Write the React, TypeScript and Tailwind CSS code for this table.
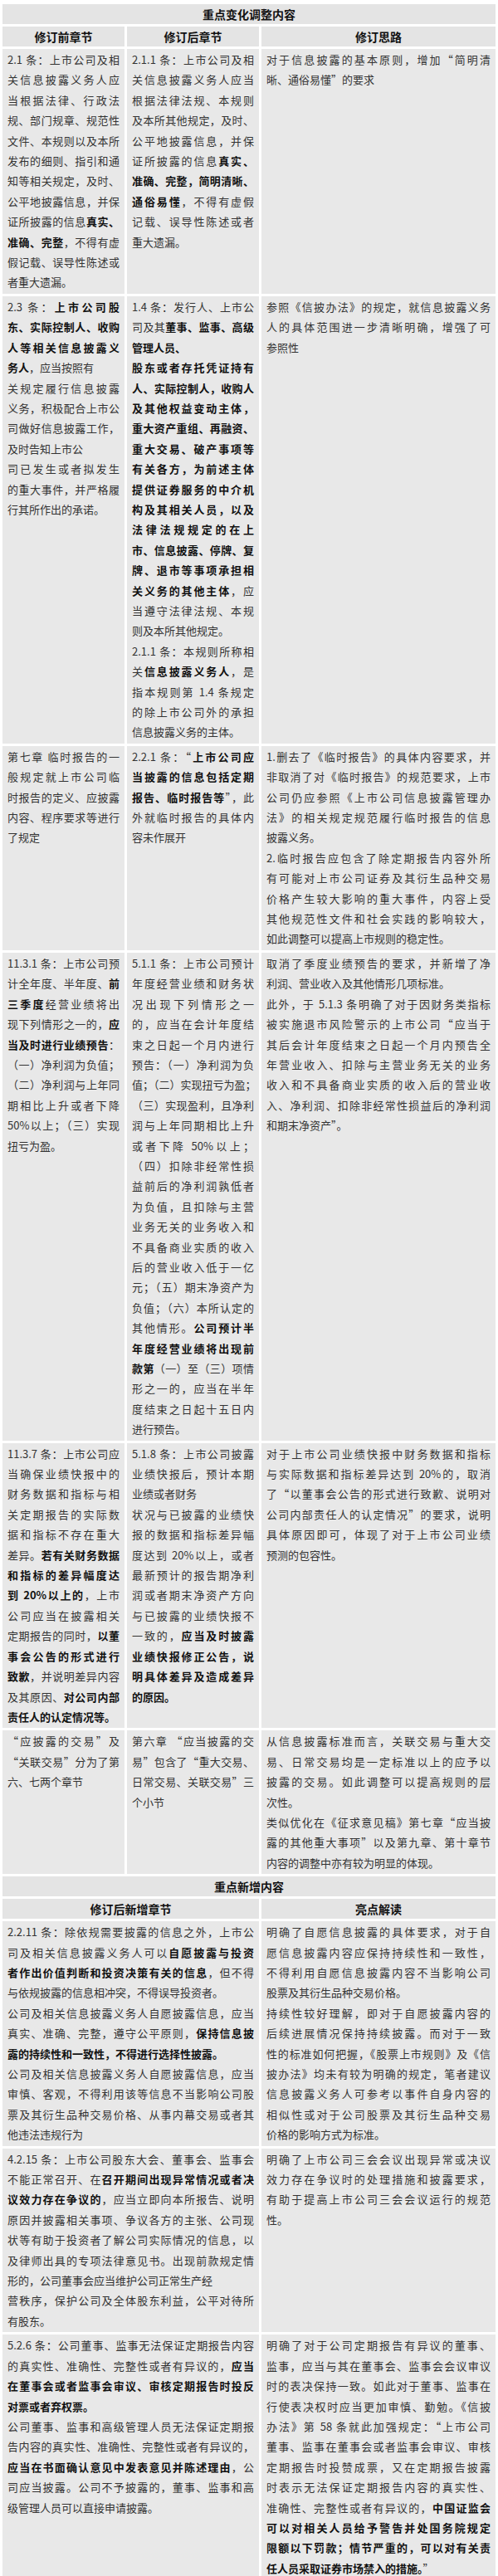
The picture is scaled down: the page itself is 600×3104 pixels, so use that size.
import React from 'react';

// Table data: one string per cell, one line per row of text.
// **…** marks bold runs; a trailing "|" marks a line that is not justified.

type Row = string[];

const changeRows: Row[] = [
  [
    `2.1 条：上市公司及相
关信息披露义务人应
当根据法律、行政法
规、部门规章、规范性
文件、本规则以及本所
发布的细则、指引和通
知等相关规定，及时、
公平地披露信息，并保
证所披露的信息**真实、**
**准确、完整**，不得有虚
假记载、误导性陈述或
者重大遗漏。|`,
    `2.1.1 条：上市公司及相
关信息披露义务人应当
根据法律法规、本规则
及本所其他规定，及时、
公平地披露信息，并保
证所披露的信息**真实、**
**准确、完整，简明清晰、**
**通俗易懂**，不得有虚假
记载、误导性陈述或者
重大遗漏。|`,
    `对于信息披露的基本原则，增加“简明清
晰、通俗易懂”的要求|`,
  ],
  [
    `2.3 条：**上市公司股**
**东、实际控制人、收购**
**人等相关信息披露义**
**务人**，应当按照有|
关规定履行信息披露
义务，积极配合上市公
司做好信息披露工作，
及时告知上市公|
司已发生或者拟发生
的重大事件，并严格履
行其所作出的承诺。|`,
    `1.4 条：发行人、上市公
司及其**董事、监事、高级**
**管理人员、**|
**股东或者存托凭证持有**
**人、实际控制人，收购人**
**及其他权益变动主体，**
**重大资产重组、再融资、**
**重大交易、破产事项等**
**有关各方，为前述主体**
**提供证券服务的中介机**
**构及其相关人员，以及**
**法律法规规定的在上**
**市、信息披露、停牌、复**
**牌、退市等事项承担相**
**关义务的其他主体**，应
当遵守法律法规、本规
则及本所其他规定。|
2.1.1 条：本规则所称相
关**信息披露义务人**，是
指本规则第 1.4 条规定
的除上市公司外的承担
信息披露义务的主体。|`,
    `参照《信披办法》的规定，就信息披露义务
人的具体范围进一步清晰明确，增强了可
参照性|`,
  ],
  [
    `第七章 临时报告的一
般规定就上市公司临
时报告的定义、应披露
内容、程序要求等进行
了规定|`,
    `2.2.1 条：“**上市公司应**
**当披露的信息包括定期**
**报告、临时报告等**”，此
外就临时报告的具体内
容未作展开|`,
    `1.删去了《临时报告》的具体内容要求，并
非取消了对《临时报告》的规范要求，上市
公司仍应参照《上市公司信息披露管理办
法》的相关规定规范履行临时报告的信息
披露义务。|
2.临时报告应包含了除定期报告内容外所
有可能对上市公司证券及其衍生品种交易
价格产生较大影响的重大事件，内容上受
其他规范性文件和社会实践的影响较大，
如此调整可以提高上市规则的稳定性。|`,
  ],
  [
    `11.3.1 条：上市公司预
计全年度、半年度、**前**
**三季度**经营业绩将出
现下列情形之一的，**应**
**当及时进行业绩预告**：
（一）净利润为负值；
（二）净利润与上年同
期相比上升或者下降
50%以上；（三）实现
扭亏为盈。|`,
    `5.1.1 条：上市公司预计
年度经营业绩和财务状
况出现下列情形之一
的，应当在会计年度结
束之日起一个月内进行
预告：（一）净利润为负
值；（二）实现扭亏为盈；
（三）实现盈利，且净利
润与上年同期相比上升
或者下降 50%以上；
（四）扣除非经常性损
益前后的净利润孰低者
为负值，且扣除与主营
业务无关的业务收入和
不具备商业实质的收入
后的营业收入低于一亿
元；（五）期末净资产为
负值；（六）本所认定的
其他情形。**公司预计半**
**年度经营业绩将出现前**
**款第**（一）至（三）项情
形之一的，应当在半年
度结束之日起十五日内
进行预告。|`,
    `取消了季度业绩预告的要求，并新增了净
利润、营业收入及其他情形几项标准。|
此外，于 5.1.3 条明确了对于因财务类指标
被实施退市风险警示的上市公司“应当于
其后会计年度结束之日起一个月内预告全
年营业收入、扣除与主营业务无关的业务
收入和不具备商业实质的收入后的营业收
入、净利润、扣除非经常性损益后的净利润
和期末净资产”。|`,
  ],
  [
    `11.3.7 条：上市公司应
当确保业绩快报中的
财务数据和指标与相
关定期报告的实际数
据和指标不存在重大
差异。**若有关财务数据**
**和指标的差异幅度达**
**到 20%以上的**，上市
公司应当在披露相关
定期报告的同时，**以董**
**事会公告的形式进行**
**致歉**，并说明差异内容
及其原因、**对公司内部**
**责任人的认定情况等。**|`,
    `5.1.8 条：上市公司披露
业绩快报后，预计本期
业绩或者财务|
状况与已披露的业绩快
报的数据和指标差异幅
度达到 20%以上，或者
最新预计的报告期净利
润或者期末净资产方向
与已披露的业绩快报不
一致的，**应当及时披露**
**业绩快报修正公告，说**
**明具体差异及造成差异**
**的原因。**|`,
    `对于上市公司业绩快报中财务数据和指标
与实际数据和指标差异达到 20%的，取消
了“以董事会公告的形式进行致歉、说明对
公司内部责任人的认定情况”的要求，说明
具体原因即可，体现了对于上市公司业绩
预测的包容性。|`,
  ],
  [
    `“应披露的交易”及
“关联交易”分为了第
六、七两个章节|`,
    `第六章 “应当披露的交
易”包含了“重大交易、
日常交易、关联交易”三
个小节|`,
    `从信息披露标准而言，关联交易与重大交
易、日常交易均是一定标准以上的应予以
披露的交易。如此调整可以提高规则的层
次性。|
类似优化在《征求意见稿》第七章“应当披
露的其他重大事项”以及第九章、第十章节
内容的调整中亦有较为明显的体现。|`,
  ],
];

const newRows: Row[] = [
  [
    `2.2.11 条：除依规需要披露的信息之外，上市公
司及相关信息披露义务人可以**自愿披露与投资**
**者作出价值判断和投资决策有关的信息**，但不得
与依规披露的信息相冲突，不得误导投资者。|
公司及相关信息披露义务人自愿披露信息，应当
真实、准确、完整，遵守公平原则，**保持信息披**
**露的持续性和一致性，不得进行选择性披露。**|
公司及相关信息披露义务人自愿披露信息，应当
审慎、客观，不得利用该等信息不当影响公司股
票及其衍生品种交易价格、从事内幕交易或者其
他违法违规行为|`,
    `明确了自愿信息披露的具体要求，对于自
愿信息披露内容应保持持续性和一致性，
不得利用自愿信息披露内容不当影响公司
股票及其衍生品种交易价格。|
持续性较好理解，即对于自愿披露内容的
后续进展情况保持持续披露。而对于一致
性的标准如何把握，《股票上市规则》及《信
披办法》均未有较为明确的规定，笔者建议
信息披露义务人可参考以事件自身内容的
相似性或对于公司股票及其衍生品种交易
价格的影响方式为标准。|`,
  ],
  [
    `4.2.15 条：上市公司股东大会、董事会、监事会
不能正常召开、在**召开期间出现异常情况或者决**
**议效力存在争议的**，应当立即向本所报告、说明
原因并披露相关事项、争议各方的主张、公司现
状等有助于投资者了解公司实际情况的信息，以
及律师出具的专项法律意见书。出现前款规定情
形的，公司董事会应当维护公司正常生产经|
营秩序，保护公司及全体股东利益，公平对待所
有股东。|`,
    `明确了上市公司三会会议出现异常或决议
效力存在争议时的处理措施和披露要求，
有助于提高上市公司三会会议运行的规范
性。|`,
  ],
  [
    `5.2.6 条：公司董事、监事无法保证定期报告内容
的真实性、准确性、完整性或者有异议的，**应当**
**在董事会或者监事会审议、审核定期报告时投反**
**对票或者弃权票。**|
公司董事、监事和高级管理人员无法保证定期报
告内容的真实性、准确性、完整性或者有异议的，
**应当在书面确认意见中发表意见并陈述理由**，公
司应当披露。公司不予披露的，董事、监事和高
级管理人员可以直接申请披露。|`,
    `明确了对于公司定期报告有异议的董事、
监事，应当与其在董事会、监事会会议审议
时的表决保持一致。如此对于董事、监事在
行使表决权时应当更加审慎、勤勉。《信披
办法》第 58 条就此加强规定：“上市公司
董事、监事在董事会或者监事会审议、审核
定期报告时投赞成票，又在定期报告披露
时表示无法保证定期报告内容的真实性、
准确性、完整性或者有异议的，**中国证监会**
**可以对相关人员给予警告并处国务院规定**
**限额以下罚款；情节严重的，可以对有关责**
**任人员采取证券市场禁入的措施。**”|`,
  ],
];

const Line: React.FC<{ text: string }> = ({ text }) => {
  const plain = text.endsWith('|');
  const body = plain ? text.slice(0, -1) : text;
  const parts = body.split('**');
  return (
    <div className={plain ? 'whitespace-nowrap' : 'whitespace-nowrap text-justify [text-align-last:justify]'}>
      {parts.map((p, i) =>
        i % 2 === 1
          ? <b key={i} className="font-bold text-[#111]">{p}</b>
          : <span key={i}>{p}</span>
      )}
    </div>
  );
};

const Cell: React.FC<{ text: string }> = ({ text }) => (
  <div className="bg-[#e8e8e8] px-[6px] py-[1px] text-[13px] leading-[24.4px] text-[#333]">
    {text.split('\n').map((l, i) => <Line key={i} text={l} />)}
  </div>
);

const HeadCell: React.FC<{ children: React.ReactNode }> = ({ children }) => (
  <div className="bg-[#e4e4e4] h-[24px] flex items-center justify-center text-[14px] font-bold text-[#111]">
    {children}
  </div>
);

export default function App() {
  return (
    <div className="w-[600px] bg-white pt-[5px] pl-[3px] [font-family:'Noto_Sans_CJK_SC','Noto_Sans',sans-serif]">
      <div className="w-[594px] flex flex-col gap-[3px]">
        {/* Section 1 */}
        <HeadCell>重点变化调整内容</HeadCell>
        <div className="grid grid-cols-[147px_159px_282px] gap-[3px]">
          <HeadCell>修订前章节</HeadCell>
          <HeadCell>修订后章节</HeadCell>
          <HeadCell>修订思路</HeadCell>
        </div>
        {changeRows.map((row, i) => (
          <div key={i} className="grid grid-cols-[147px_159px_282px] gap-[3px]">
            {row.map((c, j) => <Cell key={j} text={c} />)}
          </div>
        ))}

        {/* Section 2 */}
        <HeadCell>重点新增内容</HeadCell>
        <div className="grid grid-cols-[309px_282px] gap-[3px]">
          <HeadCell>修订后新增章节</HeadCell>
          <HeadCell>亮点解读</HeadCell>
        </div>
        {newRows.map((row, i) => (
          <div key={i} className="grid grid-cols-[309px_282px] gap-[3px]">
            {row.map((c, j) => <Cell key={j} text={c} />)}
          </div>
        ))}
      </div>
    </div>
  );
}
